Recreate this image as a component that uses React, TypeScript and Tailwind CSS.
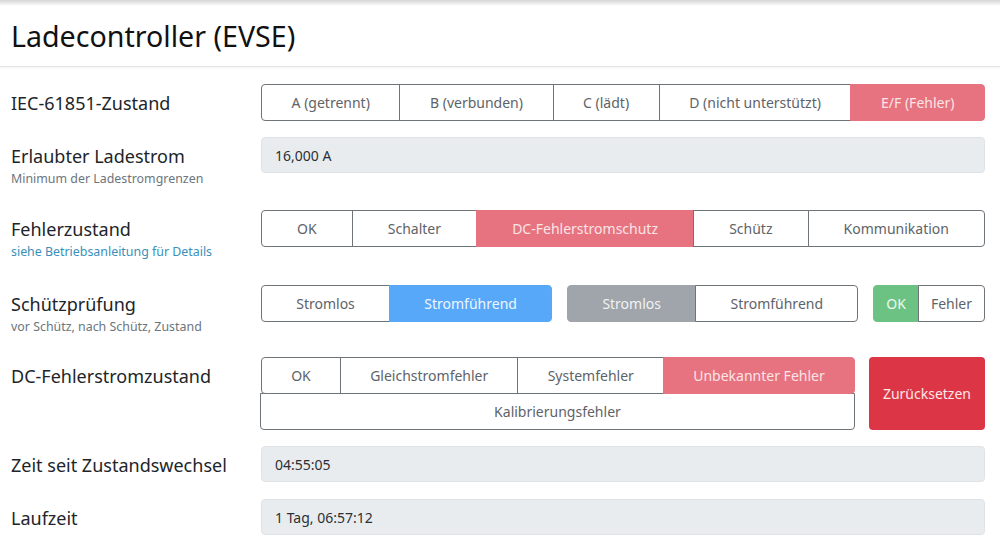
import type { ReactNode } from 'react';

type Variant = 'outline' | 'red' | 'blue' | 'gray' | 'green';

const variantClass: Record<Variant, string> = {
  outline: 'border-[#6f7479] bg-white text-[#5e6368]',
  red: 'border-[#e6737f] bg-[#e6737f] text-[#fbe4e7]',
  blue: 'border-[#58a8fa] bg-[#58a8fa] text-[#eef6ff]',
  gray: 'border-[#9fa5aa] bg-[#9fa5aa] text-[#f1f2f3]',
  green: 'border-[#6cc282] bg-[#6cc282] text-[#eef9f1]',
};

function Btn({ label, variant = 'outline' }: { label: string; variant?: Variant }) {
  return (
    <div
      className={`-ml-px flex h-[37px] flex-auto items-center justify-center whitespace-nowrap border px-3 text-[14px] first:ml-0 first:rounded-l-[4px] last:rounded-r-[4px] ${variantClass[variant]}`}
    >
      {label}
    </div>
  );
}

function Group({ children, className = '' }: { children: ReactNode; className?: string }) {
  return <div className={`flex ${className}`}>{children}</div>;
}

function Field({ value }: { value: string }) {
  return (
    <div className="flex h-[36px] w-full items-center rounded-[4px] border border-[#dfe3e7] bg-[#e9ecef] px-[13px] text-[14px] text-[#2b3035]">
      {value}
    </div>
  );
}

function Row({
  label,
  sub,
  subLink,
  className = '',
  children,
}: {
  label: string;
  sub?: string;
  subLink?: boolean;
  className?: string;
  children: ReactNode;
}) {
  return (
    <div className={`flex items-start ${className}`}>
      <div className="w-[250px] shrink-0">
        <div className="text-[18px] leading-[39px] text-[#212529]">{label}</div>
        {sub && (
          <div className={`-mt-[5px] text-[12.4px] leading-[16px] ${subLink ? 'text-[#3a90b9]' : 'text-[#6c757d]'}`}>
            {sub}
          </div>
        )}
      </div>
      <div className="min-w-0 flex-1">{children}</div>
    </div>
  );
}

export default function App() {
  return (
    <div className="h-[553px] w-[1000px] overflow-hidden bg-white font-['Noto_Sans',sans-serif]">
      <div className="h-[6px] bg-gradient-to-b from-[#d4d4d4] to-white" />
      <div className="flex h-[61px] items-center border-b border-[#e3e3e3] px-[11px] shadow-[0_1px_2px_rgba(0,0,0,0.05)]">
        <h1 className="text-[28.6px] text-[#111]">Ladecontroller (EVSE)</h1>
      </div>

      <div className="pl-[11px] pr-[15px] pt-[17px]">
        <Row label="IEC-61851-Zustand" className="h-[53px]">
          <Group>
            <Btn label="A (getrennt)" />
            <Btn label="B (verbunden)" />
            <Btn label="C (lädt)" />
            <Btn label="D (nicht unterstützt)" />
            <Btn label="E/F (Fehler)" variant="red" />
          </Group>
        </Row>

        <Row label="Erlaubter Ladestrom" sub="Minimum der Ladestromgrenzen" className="h-[73px]">
          <Field value="16,000 A" />
        </Row>

        <Row label="Fehlerzustand" sub="siehe Betriebsanleitung für Details" subLink className="h-[75px]">
          <Group>
            <Btn label="OK" />
            <Btn label="Schalter" />
            <Btn label="DC-Fehlerstromschutz" variant="red" />
            <Btn label="Schütz" />
            <Btn label="Kommunikation" />
          </Group>
        </Row>

        <Row label="Schützprüfung" sub="vor Schütz, nach Schütz, Zustand" className="h-[72px]">
          <div className="flex gap-[15px]">
            <Group className="flex-1">
              <Btn label="Stromlos" />
              <Btn label="Stromführend" variant="blue" />
            </Group>
            <Group className="flex-1">
              <Btn label="Stromlos" variant="gray" />
              <Btn label="Stromführend" />
            </Group>
            <Group>
              <Btn label="OK" variant="green" />
              <Btn label="Fehler" />
            </Group>
          </div>
        </Row>

        <Row label="DC-Fehlerstromzustand" className="h-[89px]">
          <div className="flex gap-[14px]">
            <div className="flex-1">
              <Group>
                <Btn label="OK" />
                <Btn label="Gleichstromfehler" />
                <Btn label="Systemfehler" />
                <Btn label="Unbekannter Fehler" variant="red" />
              </Group>
              <div className="-ml-px -mt-px flex h-[37px] items-center justify-center rounded-b-[4px] border border-[#6f7479] bg-white text-[14px] text-[#5e6368]">
                Kalibrierungsfehler
              </div>
            </div>
            <div className="flex h-[73px] items-center justify-center rounded-[4px] bg-[#dc3545] px-[14px] text-[14px] text-[#fde8ea]">
              Zurücksetzen
            </div>
          </div>
        </Row>

        <Row label="Zeit seit Zustandswechsel" className="h-[53px]">
          <Field value="04:55:05" />
        </Row>

        <Row label="Laufzeit">
          <Field value="1 Tag, 06:57:12" />
        </Row>
      </div>
    </div>
  );
}
